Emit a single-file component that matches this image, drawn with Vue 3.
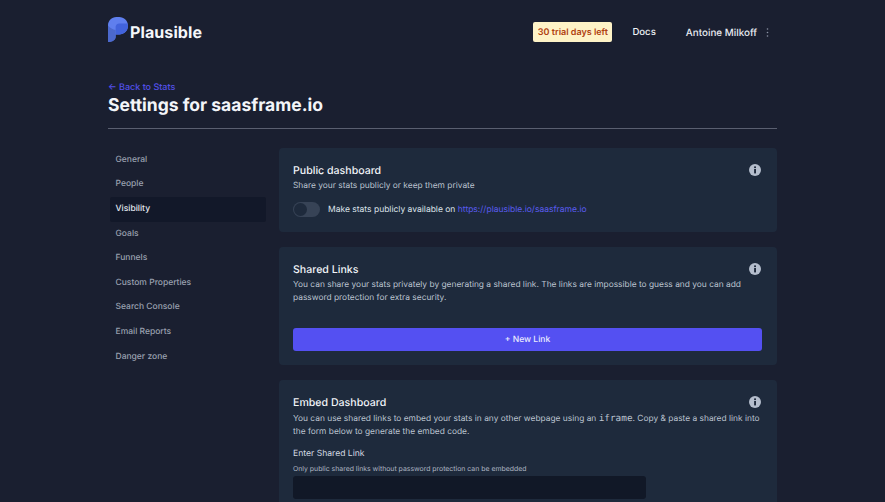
<script setup>
const nav = ['General','People','Visibility','Goals','Funnels','Custom Properties','Search Console','Email Reports','Danger zone']
</script>

<template>
  <div class="page">
    <header class="top">
      <div class="brand">
        <svg class="logo" width="20" height="25" viewBox="0 0 20 25">
          <path d="M0 8.5C0 3.8 3.6 0 8.3 0h2.9C16 0 20 3.9 20 8.7c0 4.9-4 8.7-8.8 8.7H7.6v2.6C7.6 22.8 4.4 25 0 25Z" fill="#5f7fee"/>
          <path d="M7.6 17.4V10c0-2 1.6-3.6 3.6-3.6h8.2c.4.7.6 1.5.6 2.3 0 4.9-4 8.7-8.8 8.7Z" fill="#4263dc"/>
          <path d="M0 25V8.5c2 2.5 5 4 7.6 4.5v7C7.6 22.8 4.4 25 0 25Z" fill="#4c69cd"/>
        </svg>
        <span class="word">Plausible</span>
      </div>
      <div class="right">
        <span class="trial">30 trial days left</span>
        <span class="docs">Docs</span>
        <span class="user">Antoine Milkoff</span>
        <svg class="dots" width="3" height="9" viewBox="0 0 3 9"><circle cx="1.5" cy="1" r=".8"/><circle cx="1.5" cy="4.5" r=".8"/><circle cx="1.5" cy="8" r=".8"/></svg>
      </div>
    </header>

    <div class="heading">
      <a class="back">← Back to Stats</a>
      <h1>Settings for saasframe.io</h1>
    </div>

    <div class="body">
      <nav class="side">
        <div v-for="n in nav" :key="n" class="item" :class="{ on: n === 'Visibility' }">{{ n }}</div>
      </nav>
      <main class="cards">
        <section class="card c1">
          <div class="head"><h2>Public dashboard</h2><svg class="info" width="12" height="12" viewBox="0 0 12 12"><circle cx="6" cy="6" r="6" fill="#b4bdcc"/><rect x="5.1" y="5" width="1.9" height="4.4" fill="#1e293b"/><rect x="5.1" y="2.4" width="1.9" height="1.7" fill="#1e293b"/></svg></div>
          <p>Share your stats publicly or keep them private</p>
          <div class="toggle-row">
            <span class="toggle"><i></i></span>
            <span class="make">Make stats publicly available on <a>https://plausible.io/saasframe.io</a></span>
          </div>
        </section>
        <section class="card c2">
          <div class="head"><h2>Shared Links</h2><svg class="info" width="12" height="12" viewBox="0 0 12 12"><circle cx="6" cy="6" r="6" fill="#b4bdcc"/><rect x="5.1" y="5" width="1.9" height="4.4" fill="#1e293b"/><rect x="5.1" y="2.4" width="1.9" height="1.7" fill="#1e293b"/></svg></div>
          <p>You can share your stats privately by generating a shared link. The links are impossible to guess and you can add password protection for extra security.</p>
          <button class="btn">+ New Link</button>
        </section>
        <section class="card c3">
          <div class="head"><h2>Embed Dashboard</h2><svg class="info" width="12" height="12" viewBox="0 0 12 12"><circle cx="6" cy="6" r="6" fill="#b4bdcc"/><rect x="5.1" y="5" width="1.9" height="4.4" fill="#1e293b"/><rect x="5.1" y="2.4" width="1.9" height="1.7" fill="#1e293b"/></svg></div>
          <p>You can use shared links to embed your stats in any other webpage using an <code>iframe</code>. Copy &amp; paste a shared link into the form below to generate the embed code.</p>
          <div class="label">Enter Shared Link</div>
          <div class="hint">Only public shared links without password protection can be embedded</div>
          <div class="input"></div>
        </section>
      </main>
    </div>
  </div>
</template>

<style scoped>
.page {
  height: 502px; overflow: hidden; box-sizing: border-box;
  padding: 17px 108px 0; background: #1a1f30;
  font-family: Inter, "Liberation Sans", sans-serif; color: #f1f5f9;
  text-rendering: geometricPrecision;
}
.top { display: flex; justify-content: space-between; align-items: center; height: 25px; }
.brand { display: flex; align-items: center; gap: 2px; }
.logo { display: block; }
.word { font-size: 16px; font-weight: 700; color: #f5f7fa; letter-spacing: .1px; margin-top: 5px; }
.right { display: flex; align-items: center; font-size: 9.85px; font-weight: 500; margin-right: 8px; margin-top: 5px; }
.trial { background: #fef3c7; color: #b0410f; font-weight: 600; font-size: 9px; height: 20px; line-height: 21px; width: 79px; text-align: center; border-radius: 2px; }
.docs { margin-left: 20px; margin-top: 1px; color: #eef1f6; font-size: 9.6px; }
.user { margin-left: 30px; margin-top: 1px; color: #e8ebf2; }
.dots { margin-left: 9px; fill: #8b93a5; }
.heading { margin-top: 40px; padding-bottom: 10px; border-bottom: 1px solid #5a5f70; }
.back { display: block; font-size: 9px; font-weight: 500; color: #5350ea; line-height: 12px; }
h1 { margin: 0; font-size: 17.5px; font-weight: 700; line-height: 24px; color: #f3f5f9; }
.body { display: flex; margin-top: 19px; }
.side { width: 156px; margin-left: 2px; flex: none; margin-top: -.2px; }
.item { height: 24.6px; line-height: 24.6px; padding-left: 5.5px; font-size: 8.5px; font-weight: 500; color: #99a0af; }
.item.on { background: #121829; color: #e2e8f0; border-radius: 2px; }
.cards { width: 498px; margin-left: 13px; display: flex; flex-direction: column; gap: 15px; }
.card { background: #1e2a3c; border-radius: 4px; padding: 14px 15px 14px 14px; box-sizing: border-box; flex: none; }
.c1 { height: 84px; }
.c2 { height: 118px; }
.c3 { height: 170px; }
.head { display: flex; justify-content: space-between; align-items: center; height: 16px; padding-right: 1px; }
h2 { margin: 0; font-size: 10.6px; font-weight: 500; color: #f1f4f8; }
p { margin: 2px 0 0; font-size: 8.4px; line-height: 13px; color: #bcc4d0; }
code { font-family: "DejaVu Sans Mono", "Liberation Mono", monospace; font-size: 9.4px; }
.toggle-row { display: flex; align-items: center; margin-top: 9px; }
.toggle { width: 27px; height: 15px; border-radius: 8px; background: #374356; display: block; position: relative; flex: none; }
.toggle i { position: absolute; left: 1px; top: 1px; width: 13px; height: 13px; border-radius: 50%; background: #1e2a3c; }
.make { margin-left: 8px; font-size: 8.5px; color: #dde2ea; }
.make a { color: #5a5cf0; }
.btn { display: block; width: 100%; height: 23px; margin-top: 23px; border: 0; border-radius: 3px; background: #5450f2; color: #e9eafd; font: 500 8.5px Inter, "Liberation Sans", sans-serif; text-rendering: geometricPrecision; }
.label { margin-top: 9px; font-size: 8.6px; font-weight: 400; color: #d3d9e2; line-height: 13px; }
.hint { margin-top: 2px; font-size: 6.9px; color: #aeb6c3; line-height: 11px; }
.input { width: 353px; height: 23px; margin-top: 2px; background: #111827; border-radius: 3px; }
</style>

<style>
html, body { margin: 0; background: #1a1f30; overflow: hidden; }
</style>
